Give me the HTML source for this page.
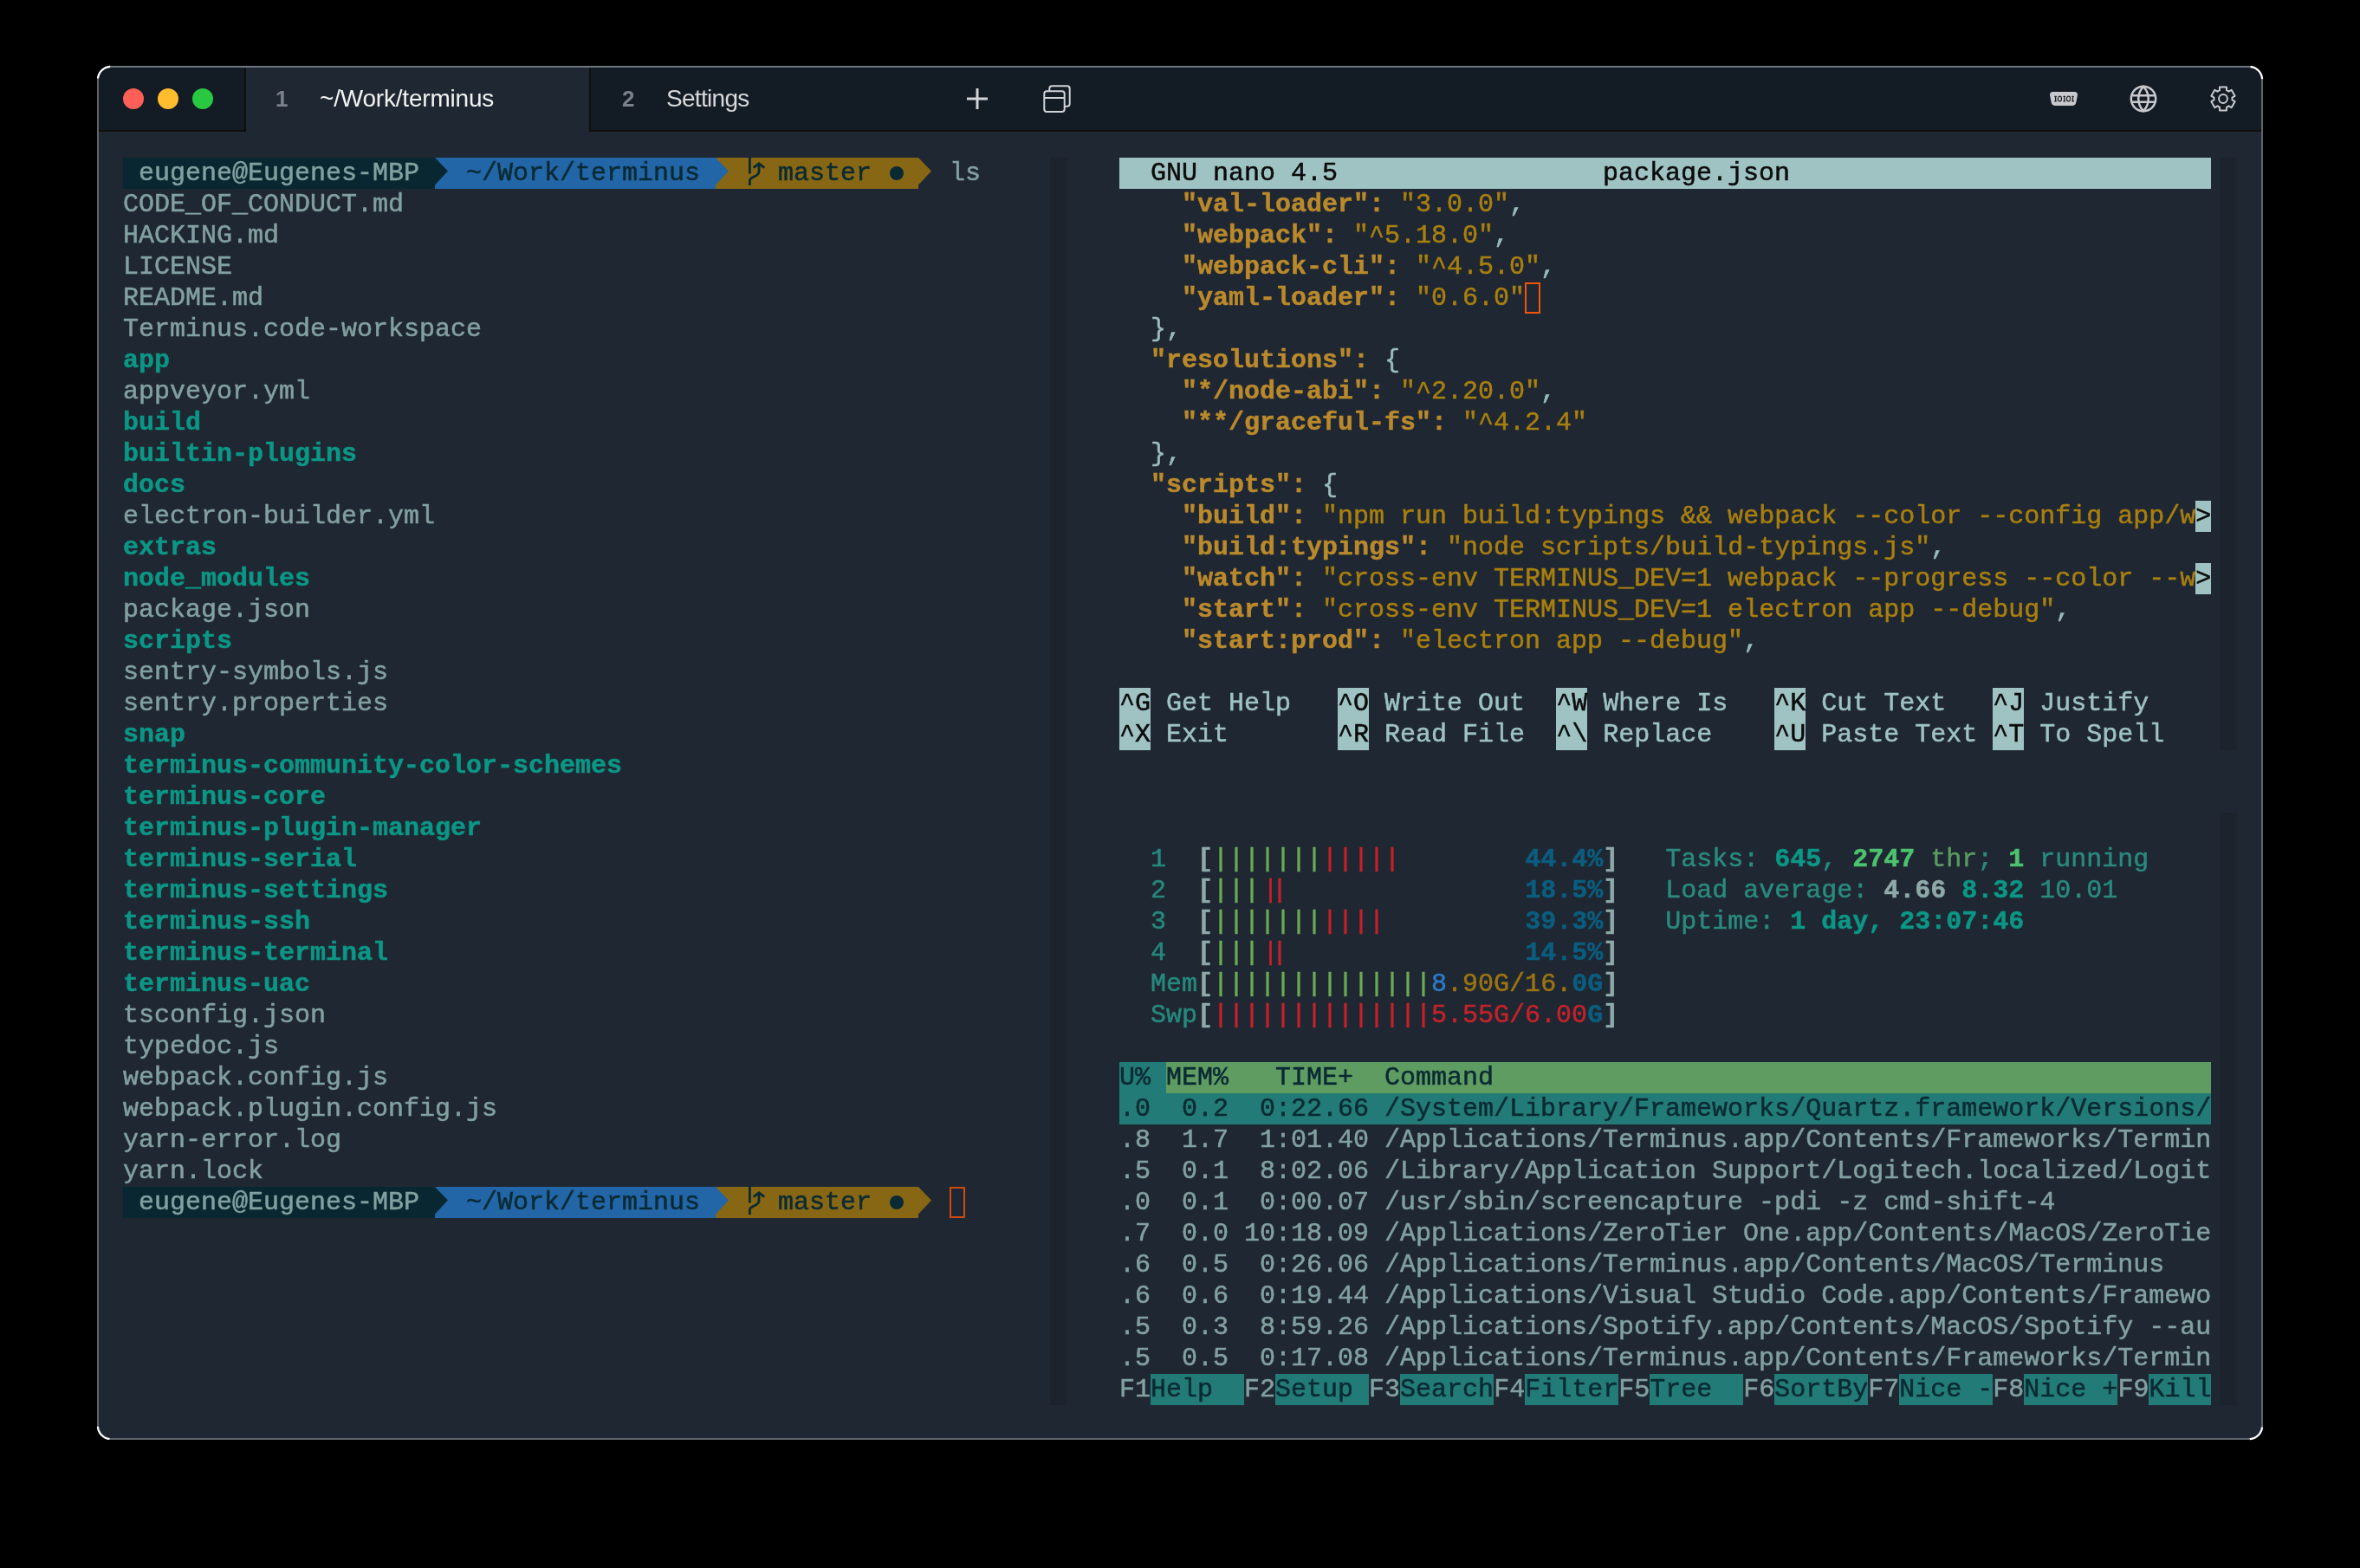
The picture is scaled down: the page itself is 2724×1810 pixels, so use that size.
<!DOCTYPE html><html><head><meta charset="utf-8"><style>
html,body{margin:0;padding:0;background:#000;width:2724px;height:1810px;overflow:hidden}
.win{position:absolute;left:112px;top:76px;width:2500px;height:1586px;background:#1f2832;border-radius:16px;overflow:hidden}
.frame{position:absolute;left:112px;top:76px;width:2500px;height:1586px;box-sizing:border-box;border:2px solid #5f656c;border-top-color:#70767d;border-radius:16px;z-index:10}
.abs{position:absolute}
.p{position:absolute;will-change:transform;-webkit-text-stroke-width:0.5px;font-family:"Liberation Mono",monospace;font-size:30px;color:#83a0a1;white-space:pre}
.r{height:36px;line-height:36px}
.r span{display:inline-block;height:36px;vertical-align:top}
.seg{position:absolute;height:36px}
.arr{position:absolute;overflow:visible}
.ptxt{position:absolute;will-change:transform;-webkit-text-stroke-width:0.5px;font-family:"Liberation Mono",monospace;font-size:30px;line-height:36px;white-space:pre}
.dot{position:absolute;width:16px;height:16px;border-radius:50%}
.strip{position:absolute;width:20px;background:#1c232c}
.tabtxt{position:absolute;will-change:transform;font-family:"Liberation Sans",sans-serif;white-space:pre}
</style></head><body><div class="win"><div class="abs" style="left:0;top:0;width:2500px;height:74px;background:#131b25;border-bottom:2px solid #0f0f0e"></div><div class="abs" style="left:170px;top:0;width:396px;height:76px;background:#1f2832;border-left:2px solid #0f0f0e"></div><div class="abs" style="left:568px;top:0;width:2px;height:76px;background:#0f0f0e"></div><div class="abs" style="left:30px;top:26px;width:24px;height:24px;border-radius:50%;background:#fe5f57"></div><div class="abs" style="left:70px;top:26px;width:24px;height:24px;border-radius:50%;background:#febc2e"></div><div class="abs" style="left:110px;top:26px;width:24px;height:24px;border-radius:50%;background:#28c840"></div><div class="tabtxt" style="left:206px;top:18px;font-size:26px;font-weight:bold;color:#7b818a;line-height:40px">1</div><div class="tabtxt" style="left:257px;top:18px;font-size:28px;letter-spacing:-0.2px;color:#f2f2f2;line-height:40px">~/Work/terminus</div><div class="tabtxt" style="left:606px;top:18px;font-size:26px;font-weight:bold;color:#7b818a;line-height:40px">2</div><div class="tabtxt" style="left:657px;top:18px;font-size:28px;letter-spacing:-0.7px;color:#d8d8d8;line-height:40px">Settings</div><svg class="abs" style="left:1003px;top:25px" width="26" height="26" viewBox="0 0 26 26"><path d="M13 1 V25 M1 13 H25" stroke="#d2d3d6" stroke-width="3"/></svg><svg class="abs" style="left:1091px;top:21px" width="34" height="34" viewBox="0 0 34 34"><g fill="none" stroke="#d2d3d6" stroke-width="2"><path d="M8.3 8.3 V5.3 Q8.3 2.3 11.3 2.3 H28.7 Q31.7 2.3 31.7 5.3 V22.7 Q31.7 25.7 28.7 25.7 H25.7"/><rect x="2.3" y="8.3" width="23.4" height="23.7" rx="3"/><path d="M2.3 15.9 H25.7"/></g></svg><svg class="abs" style="left:2253px;top:29px" width="34" height="18" viewBox="0 0 34 18"><path d="M4.5 1 H29.5 Q33 1 33 4.5 L31.5 12.5 Q30.8 17 26.5 17 H7.5 Q3.2 17 2.5 12.5 L1 4.5 Q1 1 4.5 1 Z" fill="#c8c9cc"/><path d="M7.6 6.3 V11.8 M6.3 6.3 H8.9 M6.3 11.8 H8.9" stroke="#1b2028" stroke-width="1.3" fill="none"/><path d="M17.8 6.3 V11.8 M16.5 6.3 H19.1 M16.5 11.8 H19.1" stroke="#1b2028" stroke-width="1.3" fill="none"/><path d="M27.5 6.3 V11.8 M26.2 6.3 H28.8 M26.2 11.8 H28.8" stroke="#1b2028" stroke-width="1.3" fill="none"/><ellipse cx="12.4" cy="9" rx="2.1" ry="2.8" stroke="#1b2028" stroke-width="1.2" fill="none"/><ellipse cx="22.5" cy="9" rx="2.1" ry="2.8" stroke="#1b2028" stroke-width="1.2" fill="none"/></svg><svg class="abs" style="left:2345px;top:21px" width="34" height="34" viewBox="0 0 34 34"><g fill="none" stroke="#c8c9cc" stroke-width="2.5"><circle cx="17" cy="17" r="14.2"/><path d="M17 2.8 Q11.2 9 11.2 17 Q11.2 25 17 31.2 Q22.8 25 22.8 17 Q22.8 9 17 2.8 Z"/><path d="M3 13.3 H31 M3 20.7 H31"/></g></svg><svg class="abs" style="left:2437px;top:21px" width="34" height="34" viewBox="0 0 34 34"><g fill="none" stroke="#c8c9cc" stroke-width="2" stroke-linejoin="round"><path d="M13.00 7.18 L13.00 3.58 L21.00 3.58 L21.00 7.18 L23.50 8.63 L26.62 6.83 L30.62 13.76 L27.50 15.56 L27.50 18.44 L30.62 20.24 L26.62 27.17 L23.50 25.37 L21.00 26.82 L21.00 30.42 L13.00 30.42 L13.00 26.82 L10.50 25.37 L7.38 27.17 L3.38 20.24 L6.50 18.44 L6.50 15.56 L3.38 13.76 L7.38 6.83 L10.50 8.63 Z"/><circle cx="17" cy="17" r="4.9"/></g></svg><div class="strip" style="left:1100px;top:106px;height:1440px"></div><div class="strip" style="left:2450px;top:106px;height:684px"></div><div class="strip" style="left:2450px;top:862px;height:684px"></div><div class="seg" style="left:30.0px;top:106px;width:360.0px;background:#092730"></div><div class="seg" style="left:390.0px;top:106px;width:324.0px;background:#2266a8"></div><div class="seg" style="left:714.0px;top:106px;width:234.0px;background:#876713"></div><svg class="arr" style="left:390.0px;top:106px" width="18" height="36" viewBox="0 0 18 36"><path d="M0 0 L15 15.5 L0 31.5 Z" fill="#092730"/></svg><svg class="arr" style="left:714.0px;top:106px" width="18" height="36" viewBox="0 0 18 36"><path d="M0 0 L15 15.5 L0 31.5 Z" fill="#2266a8"/></svg><svg class="arr" style="left:948.0px;top:106px" width="18" height="36" viewBox="0 0 18 36"><path d="M0 0 L15 15.5 L0 31.5 Z" fill="#876713"/></svg><div class="ptxt" style="left:48.0px;top:106px;color:#83a0a1">eugene@Eugenes-MBP</div><div class="ptxt" style="left:426.0px;top:106px;color:#0a2a33">~/Work/terminus</div><div class="ptxt" style="left:786.0px;top:106px;color:#0a2a33">master</div><svg class="arr" style="left:750.0px;top:106px" width="18" height="36" viewBox="0 0 18 36"><path d="M3.4 -1 V18.5 M3.4 32 V26.5 C3.4 22 14 22 14 16.5 V7.5 M7.6 11.7 L14 6.8 L20.3 11.7" fill="none" stroke="#0a2a33" stroke-width="2.8"/></svg><div class="dot" style="left:915.0px;top:116px;background:#0a2a33"></div><div class="p" style="left:30px;top:106px"><div class="r"></div><div class="r">CODE_OF_CONDUCT.md</div><div class="r">HACKING.md</div><div class="r">LICENSE</div><div class="r">README.md</div><div class="r">Terminus.code-workspace</div><div class="r"><span style="color:#0b9685;font-weight:bold">app</span></div><div class="r">appveyor.yml</div><div class="r"><span style="color:#0b9685;font-weight:bold">build</span></div><div class="r"><span style="color:#0b9685;font-weight:bold">builtin-plugins</span></div><div class="r"><span style="color:#0b9685;font-weight:bold">docs</span></div><div class="r">electron-builder.yml</div><div class="r"><span style="color:#0b9685;font-weight:bold">extras</span></div><div class="r"><span style="color:#0b9685;font-weight:bold">node_modules</span></div><div class="r">package.json</div><div class="r"><span style="color:#0b9685;font-weight:bold">scripts</span></div><div class="r">sentry-symbols.js</div><div class="r">sentry.properties</div><div class="r"><span style="color:#0b9685;font-weight:bold">snap</span></div><div class="r"><span style="color:#0b9685;font-weight:bold">terminus-community-color-schemes</span></div><div class="r"><span style="color:#0b9685;font-weight:bold">terminus-core</span></div><div class="r"><span style="color:#0b9685;font-weight:bold">terminus-plugin-manager</span></div><div class="r"><span style="color:#0b9685;font-weight:bold">terminus-serial</span></div><div class="r"><span style="color:#0b9685;font-weight:bold">terminus-settings</span></div><div class="r"><span style="color:#0b9685;font-weight:bold">terminus-ssh</span></div><div class="r"><span style="color:#0b9685;font-weight:bold">terminus-terminal</span></div><div class="r"><span style="color:#0b9685;font-weight:bold">terminus-uac</span></div><div class="r">tsconfig.json</div><div class="r">typedoc.js</div><div class="r">webpack.config.js</div><div class="r">webpack.plugin.config.js</div><div class="r">yarn-error.log</div><div class="r">yarn.lock</div></div><div class="p" style="left:1180px;top:106px"><div class="r"><span style="color:#0b0b0b;background:#9fc2c3">  GNU nano 4.5                 package.json                           </span></div><div class="r">    <span style="color:#ba892c;font-weight:bold">&quot;val-loader&quot;: </span><span style="color:#a97f0f">&quot;3.0.0&quot;</span><span style="color:#9bbcbd">,</span></div><div class="r">    <span style="color:#ba892c;font-weight:bold">&quot;webpack&quot;: </span><span style="color:#a97f0f">&quot;^5.18.0&quot;</span><span style="color:#9bbcbd">,</span></div><div class="r">    <span style="color:#ba892c;font-weight:bold">&quot;webpack-cli&quot;: </span><span style="color:#a97f0f">&quot;^4.5.0&quot;</span><span style="color:#9bbcbd">,</span></div><div class="r">    <span style="color:#ba892c;font-weight:bold">&quot;yaml-loader&quot;: </span><span style="color:#a97f0f">&quot;0.6.0&quot;</span><span style="box-shadow:inset 0 0 0 2px #f55309"> </span></div><div class="r">  <span style="color:#9bbcbd">},</span></div><div class="r">  <span style="color:#ba892c;font-weight:bold">&quot;resolutions&quot;: </span><span style="color:#9bbcbd">{</span></div><div class="r">    <span style="color:#ba892c;font-weight:bold">&quot;*/node-abi&quot;: </span><span style="color:#a97f0f">&quot;^2.20.0&quot;</span><span style="color:#9bbcbd">,</span></div><div class="r">    <span style="color:#ba892c;font-weight:bold">&quot;**/graceful-fs&quot;: </span><span style="color:#a97f0f">&quot;^4.2.4&quot;</span></div><div class="r">  <span style="color:#9bbcbd">},</span></div><div class="r">  <span style="color:#ba892c;font-weight:bold">&quot;scripts&quot;: </span><span style="color:#9bbcbd">{</span></div><div class="r">    <span style="color:#ba892c;font-weight:bold">&quot;build&quot;: </span><span style="color:#a97f0f">&quot;npm run build:typings &amp;&amp; webpack --color --config app/w</span><span style="color:#0b0b0b;background:#9fc2c3">&gt;</span></div><div class="r">    <span style="color:#ba892c;font-weight:bold">&quot;build:typings&quot;: </span><span style="color:#a97f0f">&quot;node scripts/build-typings.js&quot;</span><span style="color:#9bbcbd">,</span></div><div class="r">    <span style="color:#ba892c;font-weight:bold">&quot;watch&quot;: </span><span style="color:#a97f0f">&quot;cross-env TERMINUS_DEV=1 webpack --progress --color --w</span><span style="color:#0b0b0b;background:#9fc2c3">&gt;</span></div><div class="r">    <span style="color:#ba892c;font-weight:bold">&quot;start&quot;: </span><span style="color:#a97f0f">&quot;cross-env TERMINUS_DEV=1 electron app --debug&quot;</span><span style="color:#9bbcbd">,</span></div><div class="r">    <span style="color:#ba892c;font-weight:bold">&quot;start:prod&quot;: </span><span style="color:#a97f0f">&quot;electron app --debug&quot;</span><span style="color:#9bbcbd">,</span></div><div class="r"></div><div class="r"><span style="color:#0b0b0b;background:#9fc2c3">^G</span><span style="color:#9fc2c3"> Get Help   </span><span style="color:#0b0b0b;background:#9fc2c3">^O</span><span style="color:#9fc2c3"> Write Out  </span><span style="color:#0b0b0b;background:#9fc2c3">^W</span><span style="color:#9fc2c3"> Where Is   </span><span style="color:#0b0b0b;background:#9fc2c3">^K</span><span style="color:#9fc2c3"> Cut Text   </span><span style="color:#0b0b0b;background:#9fc2c3">^J</span><span style="color:#9fc2c3"> Justify    </span></div><div class="r"><span style="color:#0b0b0b;background:#9fc2c3">^X</span><span style="color:#9fc2c3"> Exit       </span><span style="color:#0b0b0b;background:#9fc2c3">^R</span><span style="color:#9fc2c3"> Read File  </span><span style="color:#0b0b0b;background:#9fc2c3">^\</span><span style="color:#9fc2c3"> Replace    </span><span style="color:#0b0b0b;background:#9fc2c3">^U</span><span style="color:#9fc2c3"> Paste Text </span><span style="color:#0b0b0b;background:#9fc2c3">^T</span><span style="color:#9fc2c3"> To Spell   </span></div></div><div class="p" style="left:1180px;top:862px"><div class="r"></div><div class="r">  <span style="color:#26897e">1</span>  <span style="color:#8fa9a9;font-weight:bold">[</span><span style="color:#6aab55">|||||||</span><span style="color:#c4222a">|||||</span>        <span style="color:#0b5d7f;font-weight:bold">44.4%</span><span style="color:#8fa9a9;font-weight:bold">]</span>   <span style="color:#2a8a7e">Tasks: </span><span style="color:#0b9685;font-weight:bold">645</span><span style="color:#2a8a7e">, </span><span style="color:#4cc36e;font-weight:bold">2747</span><span style="color:#5a9a60"> thr</span><span style="color:#2a8a7e">; </span><span style="color:#4cc36e;font-weight:bold">1</span><span style="color:#2a8a7e"> running</span></div><div class="r">  <span style="color:#26897e">2</span>  <span style="color:#8fa9a9;font-weight:bold">[</span><span style="color:#6aab55">|||</span><span style="color:#c4222a;position:relative;left:3.5px">|</span><span style="color:#c4222a;position:relative;left:-4px">|</span>               <span style="color:#0b5d7f;font-weight:bold">18.5%</span><span style="color:#8fa9a9;font-weight:bold">]</span>   <span style="color:#2a8a7e">Load average: </span><span style="color:#8fa9a9;font-weight:bold">4.66 </span><span style="color:#0b9685;font-weight:bold">8.32 </span><span style="color:#2a8a7e">10.01</span></div><div class="r">  <span style="color:#26897e">3</span>  <span style="color:#8fa9a9;font-weight:bold">[</span><span style="color:#6aab55">|||||||</span><span style="color:#c4222a">||||</span>         <span style="color:#0b5d7f;font-weight:bold">39.3%</span><span style="color:#8fa9a9;font-weight:bold">]</span>   <span style="color:#2a8a7e">Uptime: </span><span style="color:#0b9685;font-weight:bold">1 day, 23:07:46</span></div><div class="r">  <span style="color:#26897e">4</span>  <span style="color:#8fa9a9;font-weight:bold">[</span><span style="color:#6aab55">|||</span><span style="color:#c4222a;position:relative;left:3.5px">|</span><span style="color:#c4222a;position:relative;left:-4px">|</span>               <span style="color:#0b5d7f;font-weight:bold">14.5%</span><span style="color:#8fa9a9;font-weight:bold">]</span></div><div class="r">  <span style="color:#26897e">Mem</span><span style="color:#8fa9a9;font-weight:bold">[</span><span style="color:#6aab55">||||||||||||||</span><span style="color:#2b7bc6">8</span><span style="color:#9c7411">.90G/16.</span><span style="color:#0b5d7f;font-weight:bold">0G</span><span style="color:#8fa9a9;font-weight:bold">]</span></div><div class="r">  <span style="color:#26897e">Swp</span><span style="color:#8fa9a9;font-weight:bold">[</span><span style="color:#c4222a">||||||||||||||</span><span style="color:#c4222a">5.55G/6.00</span><span style="color:#0b5d7f;font-weight:bold">G</span><span style="color:#8fa9a9;font-weight:bold">]</span></div><div class="r"></div><div class="r"><span style="color:#0a2a33;background:#237b77">U% </span><span style="color:#0a2a33;background:#5f9c62">MEM%   TIME+  Command                                              </span></div><div class="r"><span style="color:#0a2a33;background:#237b77">.0  0.2  0:22.66 /System/Library/Frameworks/Quartz.framework/Versions/</span></div><div class="r">.8  1.7  1:01.40 /Applications/Terminus.app/Contents/Frameworks/Termin</div><div class="r">.5  0.1  8:02.06 /Library/Application Support/Logitech.localized/Logit</div><div class="r">.0  0.1  0:00.07 /usr/sbin/screencapture -pdi -z cmd-shift-4</div><div class="r">.7  0.0 10:18.09 /Applications/ZeroTier One.app/Contents/MacOS/ZeroTie</div><div class="r">.6  0.5  0:26.06 /Applications/Terminus.app/Contents/MacOS/Terminus</div><div class="r">.6  0.6  0:19.44 /Applications/Visual Studio Code.app/Contents/Framewo</div><div class="r">.5  0.3  8:59.26 /Applications/Spotify.app/Contents/MacOS/Spotify --au</div><div class="r">.5  0.5  0:17.08 /Applications/Terminus.app/Contents/Frameworks/Termin</div><div class="r">F1<span style="color:#0a2a33;background:#237b77">Help  </span>F2<span style="color:#0a2a33;background:#237b77">Setup </span>F3<span style="color:#0a2a33;background:#237b77">Search</span>F4<span style="color:#0a2a33;background:#237b77">Filter</span>F5<span style="color:#0a2a33;background:#237b77">Tree  </span>F6<span style="color:#0a2a33;background:#237b77">SortBy</span>F7<span style="color:#0a2a33;background:#237b77">Nice -</span>F8<span style="color:#0a2a33;background:#237b77">Nice +</span>F9<span style="color:#0a2a33;background:#237b77">Kill</span></div></div><div class="seg" style="left:30.0px;top:1294px;width:360.0px;background:#092730"></div><div class="seg" style="left:390.0px;top:1294px;width:324.0px;background:#2266a8"></div><div class="seg" style="left:714.0px;top:1294px;width:234.0px;background:#876713"></div><svg class="arr" style="left:390.0px;top:1294px" width="18" height="36" viewBox="0 0 18 36"><path d="M0 0 L15 15.5 L0 31.5 Z" fill="#092730"/></svg><svg class="arr" style="left:714.0px;top:1294px" width="18" height="36" viewBox="0 0 18 36"><path d="M0 0 L15 15.5 L0 31.5 Z" fill="#2266a8"/></svg><svg class="arr" style="left:948.0px;top:1294px" width="18" height="36" viewBox="0 0 18 36"><path d="M0 0 L15 15.5 L0 31.5 Z" fill="#876713"/></svg><div class="ptxt" style="left:48.0px;top:1294px;color:#83a0a1">eugene@Eugenes-MBP</div><div class="ptxt" style="left:426.0px;top:1294px;color:#0a2a33">~/Work/terminus</div><div class="ptxt" style="left:786.0px;top:1294px;color:#0a2a33">master</div><svg class="arr" style="left:750.0px;top:1294px" width="18" height="36" viewBox="0 0 18 36"><path d="M3.4 -1 V18.5 M3.4 32 V26.5 C3.4 22 14 22 14 16.5 V7.5 M7.6 11.7 L14 6.8 L20.3 11.7" fill="none" stroke="#0a2a33" stroke-width="2.8"/></svg><div class="dot" style="left:915.0px;top:1304px;background:#0a2a33"></div><div class="ptxt" style="left:984px;top:106px;color:#83a0a1">ls</div><div class="abs" style="left:984px;top:1294px;width:18px;height:36px;box-sizing:border-box;border:2px solid #cc4a0e"></div></div><div class="frame"></div><svg style="position:absolute;left:0;top:0;z-index:11" width="2724" height="1810"><path d="M112.90 92.00 L112.95 90.82 L113.09 89.64 L113.32 88.47 L113.64 87.33 L114.05 86.22 L114.55 85.14 L115.13 84.11 L115.78 83.12 L116.52 82.19 L117.32 81.32 L118.19 80.52 L119.12 79.78 L120.11 79.13 L121.14 78.55 L122.22 78.05 L123.33 77.64 L124.47 77.32 L125.64 77.09 L126.82 76.95 L128.00 76.90" fill="none" stroke="#ffffff" stroke-width="2.2" stroke-dasharray="0 1.5 21.5 50" /><path d="M2596.00 76.90 L2597.18 76.95 L2598.36 77.09 L2599.53 77.32 L2600.67 77.64 L2601.78 78.05 L2602.86 78.55 L2603.89 79.13 L2604.88 79.78 L2605.81 80.52 L2606.68 81.32 L2607.48 82.19 L2608.22 83.12 L2608.87 84.11 L2609.45 85.14 L2609.95 86.22 L2610.36 87.33 L2610.68 88.47 L2610.91 89.64 L2611.05 90.82 L2611.10 92.00" fill="none" stroke="#ffffff" stroke-width="2.2" stroke-dasharray="0 1.5 21.5 50" /><path d="M128.00 1661.10 L126.82 1661.05 L125.64 1660.91 L124.47 1660.68 L123.33 1660.36 L122.22 1659.95 L121.14 1659.45 L120.11 1658.87 L119.12 1658.22 L118.19 1657.48 L117.32 1656.68 L116.52 1655.81 L115.78 1654.88 L115.13 1653.89 L114.55 1652.86 L114.05 1651.78 L113.64 1650.67 L113.32 1649.53 L113.09 1648.36 L112.95 1647.18 L112.90 1646.00" fill="none" stroke="#ffffff" stroke-width="2.2" stroke-dasharray="0 1.5 21.5 50" /><path d="M2611.10 1646.00 L2611.05 1647.18 L2610.91 1648.36 L2610.68 1649.53 L2610.36 1650.67 L2609.95 1651.78 L2609.45 1652.86 L2608.87 1653.89 L2608.22 1654.88 L2607.48 1655.81 L2606.68 1656.68 L2605.81 1657.48 L2604.88 1658.22 L2603.89 1658.87 L2602.86 1659.45 L2601.78 1659.95 L2600.67 1660.36 L2599.53 1660.68 L2598.36 1660.91 L2597.18 1661.05 L2596.00 1661.10" fill="none" stroke="#ffffff" stroke-width="2.2" stroke-dasharray="0 1.5 21.5 50" /></svg></body></html>
